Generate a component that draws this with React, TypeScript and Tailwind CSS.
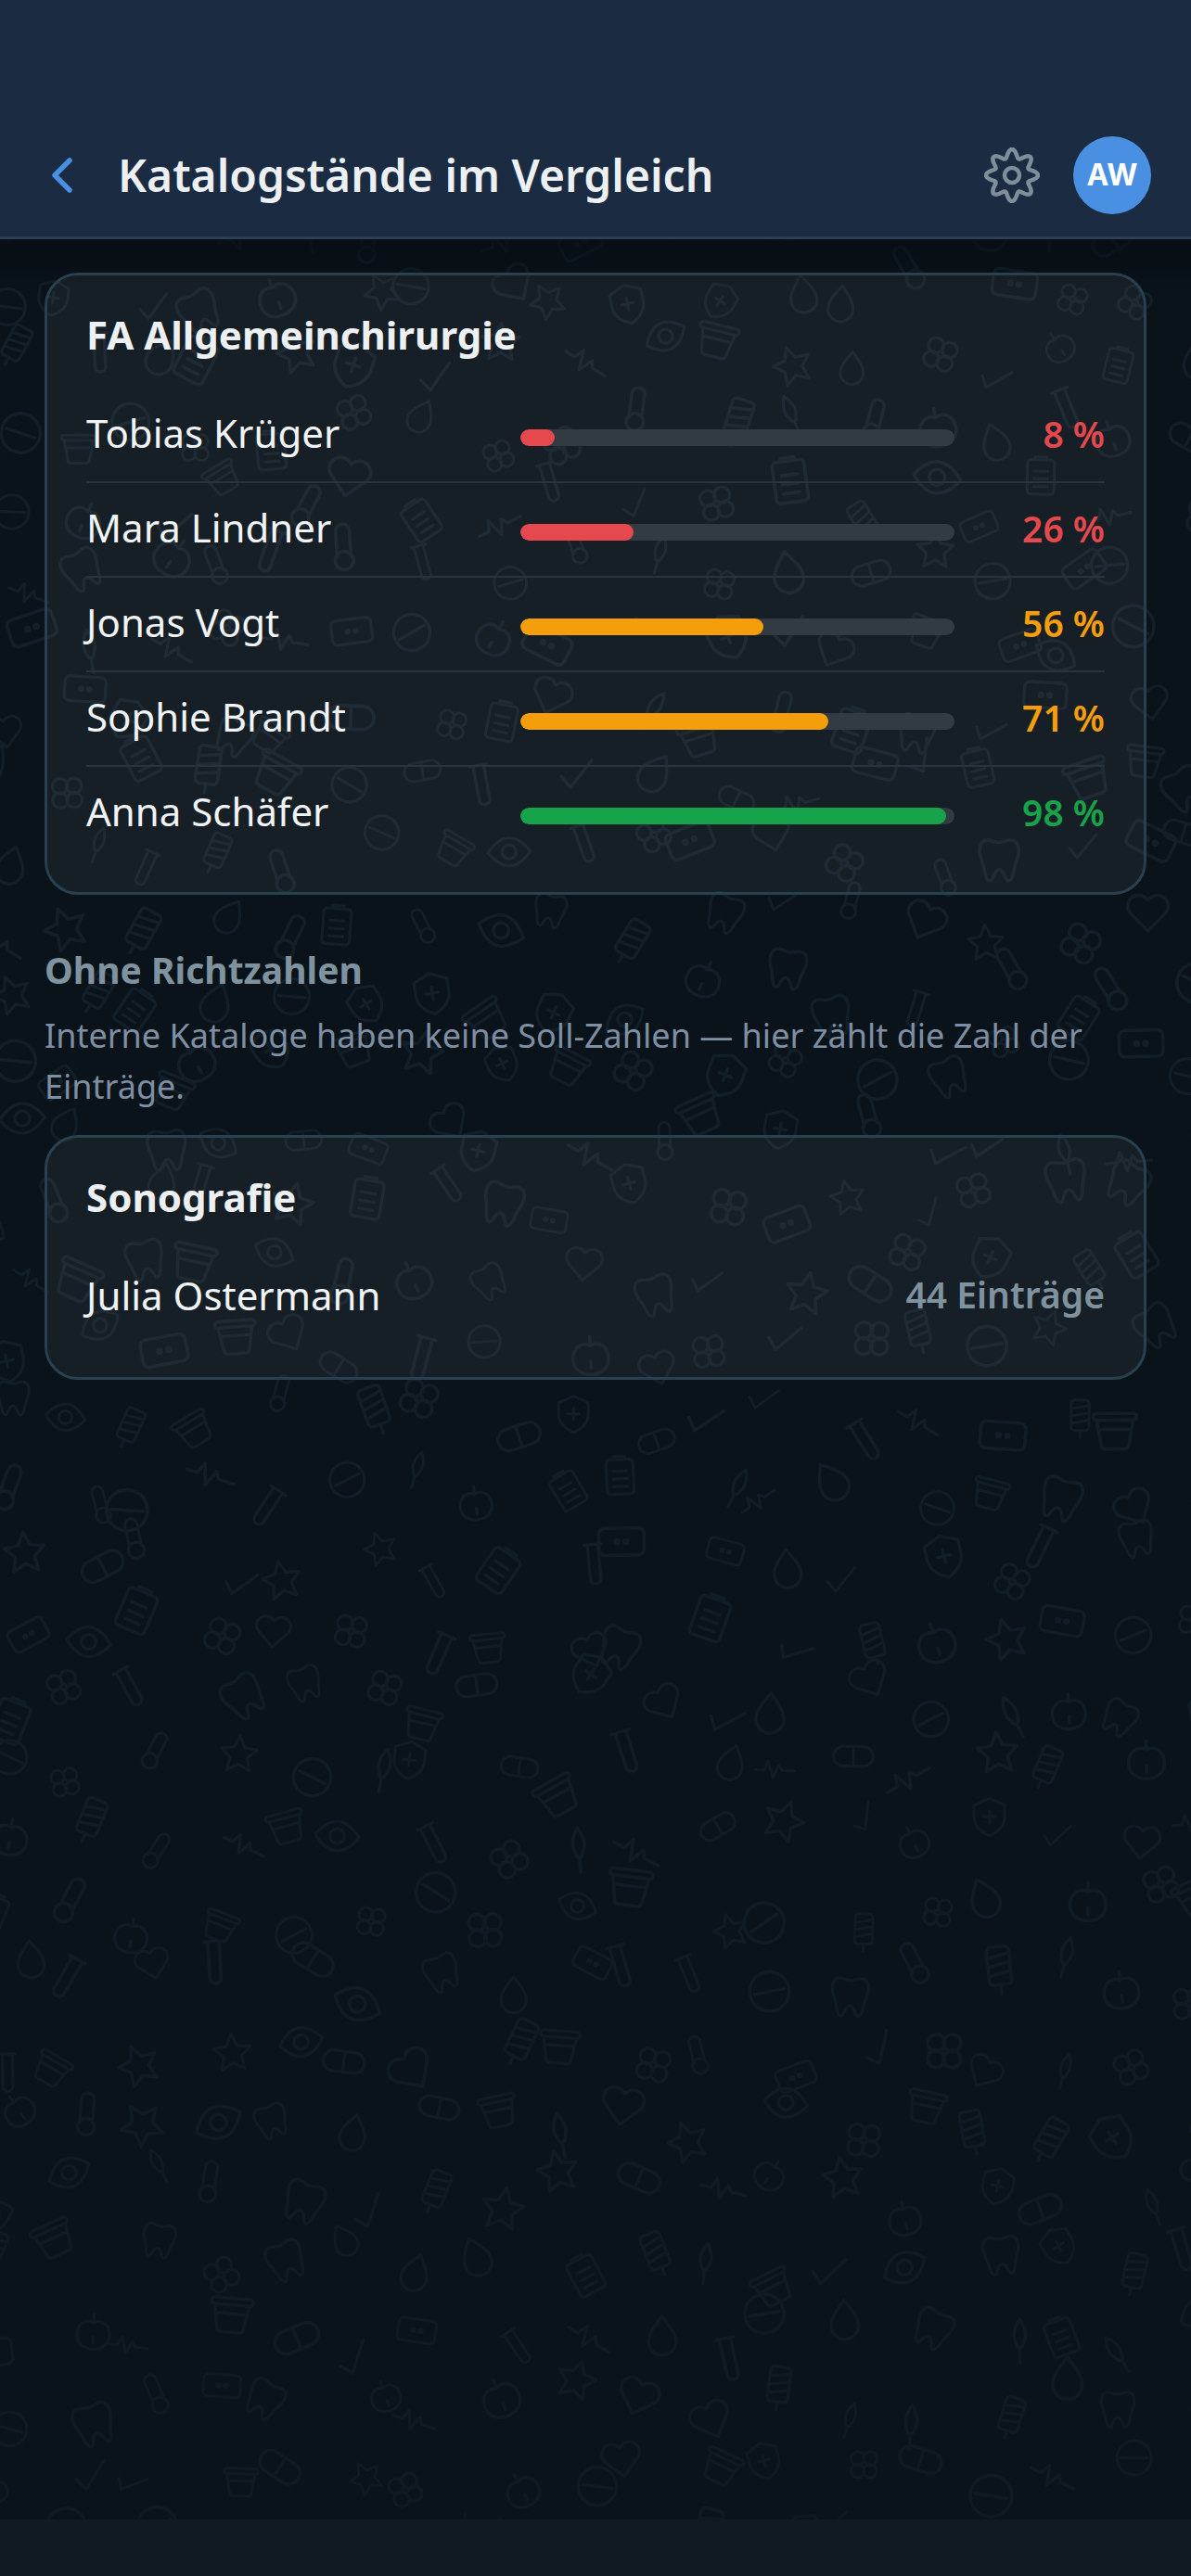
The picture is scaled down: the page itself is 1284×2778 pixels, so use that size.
import React from "react";

function rng(seed: number) {
  return () => {
    seed |= 0; seed = (seed + 0x6d2b79f5) | 0;
    let t = Math.imul(seed ^ (seed >>> 15), 1 | seed);
    t = (t + Math.imul(t ^ (t >>> 7), 61 | t)) ^ t;
    return ((t ^ (t >>> 14)) >>> 0) / 4294967296;
  };
}

const shapes: React.ReactNode[] = [
  <path d="M12 20.5 4.2 12.6a5 5 0 0 1 0-7 5 5 0 0 1 7 0l.8.8.8-.8a5 5 0 0 1 7 0 5 5 0 0 1 0 7z" />,
  <path d="m12 3 2.7 5.9 6.3.8-4.6 4.4 1.2 6.4L12 17.3l-5.6 3.2 1.2-6.4L3 9.7l6.3-.8z" />,
  <path d="M12 2.5c3.5 4.6 6.5 8 6.5 12a6.5 6.5 0 0 1-13 0c0-4 3-7.4 6.5-12z" />,
  <g><rect x="2" y="7" width="20" height="10" rx="5" /><path d="M12 7v10" /></g>,
  <g><circle cx="12" cy="12" r="9" /><path d="M5 12h14" /></g>,
  <g><rect x="5" y="4" width="14" height="18" rx="2" /><path d="M9 4V2.5h6V4M8.5 10h7M8.5 14h7M8.5 18h7" /></g>,
  <g><path d="M1.5 12S6 5 12 5s10.500 7 10.500 7-4.500 7-10.500 7S1.500 12 1.500 12z" /><circle cx="12" cy="12" r="3.500" /></g>,
  <path d="M7 3c2 0 3 1 5 1s3-1 5-1c3 0 4 3 3.500 6-.5 3-1.500 4-2 7-.3 2-1 5-2.500 5s-1.500-5-4-5-2.500 5-4 5-2.200-3-2.500-5c-.5-3-1.500-4-2-7C3 6 4 3 7 3z" />,
  <path d="M8 3h8M9.500 3v16a2.500 2.500 0 0 0 5 0V3" />,
  <g><rect x="2" y="6" width="20" height="12" rx="2.500" /><circle cx="10" cy="12" r=".8" /><circle cx="14" cy="12" r=".8" /></g>,
  <g><path d="M12 2.500 20 6v6c0 5-3.500 8-8 10-4.500-2-8-5-8-10V6z" /><path d="M12 9v6M9 12h6" /></g>,
  <path d="m5 13 4 5 10-12" />,
  <path d="M1 13h5l2-5 3 9 3-7 2 3h7" />,
  <g><path d="M9 16V5a3 3 0 0 1 6 0v11" /><circle cx="12" cy="18" r="4" /></g>,
  <path d="M12 2c2 3 3 6 2.500 9L13 15h-2l-1.500-4C9 8 10 5 12 2zM12 15v7" />,
  <g><circle cx="8.500" cy="8.500" r="3.800" /><circle cx="15.500" cy="8.500" r="3.800" /><circle cx="8.500" cy="15.500" r="3.800" /><circle cx="15.500" cy="15.500" r="3.800" /><circle cx="12" cy="12" r="1.500" /></g>,
  <path d="M4 8h16l-2 11a2 2 0 0 1-2 1.500H8A2 2 0 0 1 6 19zM4 8a1.500 1.500 0 0 1 0-3h16a1.500 1.500 0 0 1 0 3M5 12h14" />,
  <g><rect x="7" y="2" width="10" height="17" rx="2" /><path d="M7 7l10-2M7 11l10-2M7 15l10-2M12 19v4" /></g>,
  <g><path d="M12 4v4M12 8c-4-2-8 1-8 6 0 4 3 7 8 7s8-3 8-7c0-5-4-8-8-6z" /><path d="M12 15v3" /></g>,
];

function Pattern() {
  const r = rng(20417);
  const items: React.ReactNode[] = [];
  const cell = 76;
  for (let y = -20; y < 2760; y += cell) {
    for (let x = -20; x < 1300; x += cell) {
      const px = x + r() * 56;
      const py = y + r() * 56;
      const rot = (r() - 0.5) * 70;
      const s = 1.9 + r() * 0.6;
      const idx = Math.floor(r() * shapes.length);
      items.push(
        <g key={`${x}-${y}`} transform={`translate(${px.toFixed(1)} ${py.toFixed(1)}) rotate(${rot.toFixed(1)}) scale(${s.toFixed(2)}) translate(-12 -12)`}>
          {shapes[idx]}
        </g>
      );
    }
  }
  return (
    <svg className="absolute inset-0 h-full w-full blur-[0.7px]" viewBox="0 0 1284 2778" width="1284" height="2778" fill="none" stroke="#121f29" strokeWidth="1.500" strokeLinecap="round" strokeLinejoin="round">
      {items}
    </svg>
  );
}

function Gear() {
  const pts: string[] = [];
  for (let i = 0; i <= 240; i++) {
    const a = (i / 240) * Math.PI * 2 - Math.PI / 2;
    const c = Math.cos(8 * (a + Math.PI / 2));
    const rad = 23.5 + 4.5 * c;
    pts.push(`${(30 + rad * Math.cos(a)).toFixed(2)} ${(30 + rad * Math.sin(a)).toFixed(2)}`);
  }
  return (
    <svg width="60" height="60" viewBox="0 0 60 60" fill="none" stroke="#7f8e99" strokeWidth="4.500" strokeLinejoin="round">
      <path d={`M${pts.join("L")}Z`} />
      <circle cx="30" cy="30" r="8" />
    </svg>
  );
}

const rows = [
  { name: "Tobias Krüger", pct: 8, bar: "bg-[#e5484d]", text: "text-[#e5484d]" },
  { name: "Mara Lindner", pct: 26, bar: "bg-[#e5484d]", text: "text-[#e5484d]" },
  { name: "Jonas Vogt", pct: 56, bar: "bg-[#f59e0b]", text: "text-[#f59e0b]" },
  { name: "Sophie Brandt", pct: 71, bar: "bg-[#f59e0b]", text: "text-[#f59e0b]" },
  { name: "Anna Schäfer", pct: 98, bar: "bg-[#16a34a]", text: "text-[#16a34a]" },
];

export default function App() {
  return (
    <div className="relative flex h-[2778px] w-[1284px] flex-col overflow-hidden bg-[#0a131a] font-['Noto_Sans',sans-serif]">
      <Pattern />
      <div className="pointer-events-none absolute inset-x-0 top-[258px] h-[60px] bg-gradient-to-b from-[#050b10]/70 to-transparent" />
      <div className="pointer-events-none absolute inset-x-0 bottom-0 h-[1700px] bg-gradient-to-b from-transparent to-[#0a131a]/50" />
      <header className="relative flex h-[258px] shrink-0 items-end border-b-[3px] border-[#2a3f57] bg-[#1a2b42] pb-[24px] pl-[55px] pr-[43px]">
        <div className="flex h-[84px] w-full items-center">
          <svg width="24" height="38" viewBox="0 0 24 38" fill="none" stroke="#4a90e2" strokeWidth="5.500" strokeLinecap="round" strokeLinejoin="round">
            <path d="M20 3 4 19l16 16" />
          </svg>
          <h1 className="ml-[48px] flex-1 text-[48px] leading-[60px] font-semibold text-[#ecf0f3]">Katalogstände im Vergleich</h1>
          <Gear />
          <div className="ml-[36px] flex h-[84px] w-[84px] items-center justify-center rounded-full bg-[#4a90e2] font-['Inter',sans-serif] text-[32px] font-bold text-white">AW</div>
        </div>
      </header>

      <main className="relative flex-1 px-[48px] pt-[36px]">
        <section className="rounded-[36px] border-[3px] border-[#28404f] bg-white/[0.055] px-[42px] pb-[33px] pt-[34px]">
          <h2 className="mb-[28px] text-[42px] leading-[60px] font-bold text-[#ecf0f3]">FA Allgemeinchirurgie</h2>
          {rows.map((row, i) => (
            <div key={row.name} className={`flex h-[102px] items-center border-b-2 ${i < rows.length - 1 ? "border-[#2b343b]" : "border-transparent"}`}>
              <span className="mb-[5px] w-[468px] text-[42px] leading-[60px] text-[#f1f4f6]">{row.name}</span>
              <div className="mt-[6px] h-[18px] w-[468px] overflow-hidden rounded-full bg-[#323b42]">
                <div className={`h-full rounded-full ${row.bar}`} style={{ width: `${row.pct}%` }} />
              </div>
              <span className={`mb-[3px] flex-1 text-right text-[39px] leading-[60px] font-semibold ${row.text}`}>{row.pct} %</span>
            </div>
          ))}
        </section>

        <h3 className="mt-[51px] text-[39px] leading-[60px] font-bold text-[#7f929f]">Ohne Richtzahlen</h3>
        <p className="mt-[13px] text-[36px] leading-[55px] text-[#7f8fa3]">Interne Kataloge haben keine Soll-Zahlen — hier zählt die Zahl der Einträge.</p>

        <section className="mt-[25px] rounded-[36px] border-[3px] border-[#28404f] bg-white/[0.055] px-[42px] pb-[37px] pt-[34px]">
          <h2 className="mb-[25px] text-[42px] leading-[60px] font-bold text-[#ecf0f3]">Sonografie</h2>
          <div className="flex h-[102px] items-center justify-between">
            <span className="text-[42px] leading-[60px] text-[#f1f4f6]">Julia Ostermann</span>
            <span className="mb-[3px] text-[39px] leading-[60px] font-semibold text-[#7f929f]">44 Einträge</span>
          </div>
        </section>
      </main>

      <div className="relative h-[61px] shrink-0 bg-[#0f1a22]" />
    </div>
  );
}
